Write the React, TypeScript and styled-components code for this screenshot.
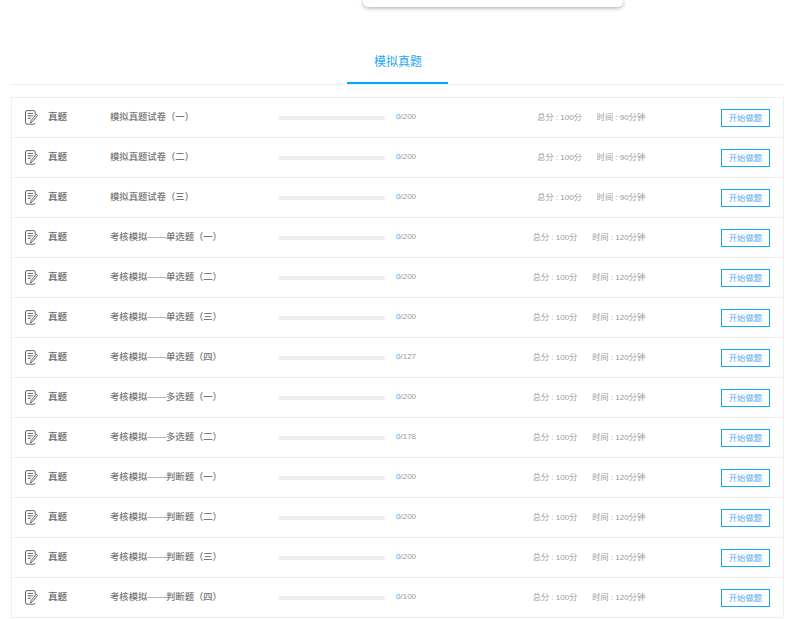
import React from "react";
import styled, { createGlobalStyle } from "styled-components";

const GlobalStyle = createGlobalStyle`
  html, body {
    margin: 0;
    padding: 0;
    background: #fff;
    font-family: "Liberation Sans", "Noto Sans CJK SC", sans-serif;
  }
`;

const Page = styled.div`
  width: 786px;
  height: 620px;
  overflow: hidden;
  padding: 0 2px 0 11px;
  box-sizing: border-box;
`;

const TopCard = styled.div`
  width: 260px;
  height: 7px;
  margin-left: 352px;
  background: #fff;
  border-radius: 0 0 5px 5px;
  box-shadow: 0 1px 4px rgba(0, 0, 0, 0.35);
`;

const TabBar = styled.div`
  height: 78px;
  display: flex;
  justify-content: center;
  align-items: flex-end;
  border-bottom: 1px solid #eee;
  box-sizing: border-box;
`;

const Tab = styled.div`
  width: 101px;
  height: 43px;
  box-sizing: border-box;
  text-align: center;
  font-size: 12px;
  line-height: 20px;
  padding: 11px 0 0 1px;
  color: #1da6f5;
  border-bottom: 2px solid #00a8ff;
`;

const List = styled.div`
  margin-top: 12px;
  border: 1px solid #eee;
  border-bottom: none;
`;

const Row = styled.div`
  height: 40px;
  box-sizing: border-box;
  border-bottom: 1px solid #eee;
  display: grid;
  grid-template-columns: 36px 62px 168px 107px 260px 125px;
  align-items: center;
`;

const IconCell = styled.div`
  padding-left: 13px;
  height: 15px;
  margin-top: -1px;
`;

const Kind = styled.div`
  font-size: 9.5px;
  font-weight: 500;
  color: #666;
  margin-top: -3px;
`;

const Name = styled.div`
  font-size: 9.33px;
  font-weight: 500;
  color: #777;
  white-space: nowrap;
  margin-top: -3px;
`;

const Track = styled.div`
  height: 4px;
  margin-top: 1px;
  border-radius: 2px;
  background: #eee;
`;

const Info = styled.div`
  display: flex;
  align-items: center;
  justify-content: space-between;
  padding-left: 11px;
  margin-top: -3px;
  font-size: 8px;
  white-space: nowrap;
`;

const Count = styled.span`
  color: #999;
`;

const Done = styled.span`
  color: #3aa8f5;
`;

const Stats = styled.div`
  display: flex;
  gap: 15px;
  color: #999;
  font-size: 8.1px;
`;

const StartButton = styled.button`
  width: 49px;
  height: 18px;
  margin-top: 1px;
  margin-left: 76px;
  padding: 0;
  background: #fff;
  border: 1px solid #16a6f6;
  border-radius: 0;
  color: #5aa9f0;
  font-family: inherit;
  font-size: 8.4px;
  line-height: 16px;
`;

const PaperIcon = () => (
  <svg width="13" height="15" viewBox="0 0 13 15" fill="none" stroke="#555" strokeWidth="0.9">
    <path d="M10.2 4.6V2C10.2 1.1 9.6.6 8.8.6H1.9C1 .6.5 1.1.5 2v10.8c0 .9.5 1.4 1.4 1.4h6.6c.9 0 1.5-.5 1.7-1.4" />
    <path d="M2.6 3.4h5.6M2.6 5.8h5.6M2.6 8.2h3.4" />
    <path d="M5.6 13l.5-2.5 5.2-6.3 1.3 1.1-5.2 6.3z" />
  </svg>
);

type Paper = { name: string; total: number; minutes: number };

const mock = (name: string, total = 200): Paper => ({ name, total, minutes: 120 });

const papers: Paper[] = [
  { name: "模拟真题试卷（一）", total: 200, minutes: 90 },
  { name: "模拟真题试卷（二）", total: 200, minutes: 90 },
  { name: "模拟真题试卷（三）", total: 200, minutes: 90 },
  mock("考核模拟——单选题（一）"),
  mock("考核模拟——单选题（二）"),
  mock("考核模拟——单选题（三）"),
  mock("考核模拟——单选题（四）", 127),
  mock("考核模拟——多选题（一）"),
  mock("考核模拟——多选题（二）", 178),
  mock("考核模拟——判断题（一）"),
  mock("考核模拟——判断题（二）"),
  mock("考核模拟——判断题（三）"),
  mock("考核模拟——判断题（四）", 100),
];

export default function App() {
  return (
    <Page>
      <GlobalStyle />
      <TopCard />
      <TabBar>
        <Tab>模拟真题</Tab>
      </TabBar>
      <List>
        {papers.map((p) => (
          <Row key={p.name}>
            <IconCell>
              <PaperIcon />
            </IconCell>
            <Kind>真题</Kind>
            <Name>{p.name}</Name>
            <Track />
            <Info>
              <Count>
                <Done>0</Done>/{p.total}
              </Count>
              <Stats>
                <span>总分 : 100分</span>
                <span>时间 : {p.minutes}分钟</span>
              </Stats>
            </Info>
            <StartButton>开始做题</StartButton>
          </Row>
        ))}
      </List>
    </Page>
  );
}
